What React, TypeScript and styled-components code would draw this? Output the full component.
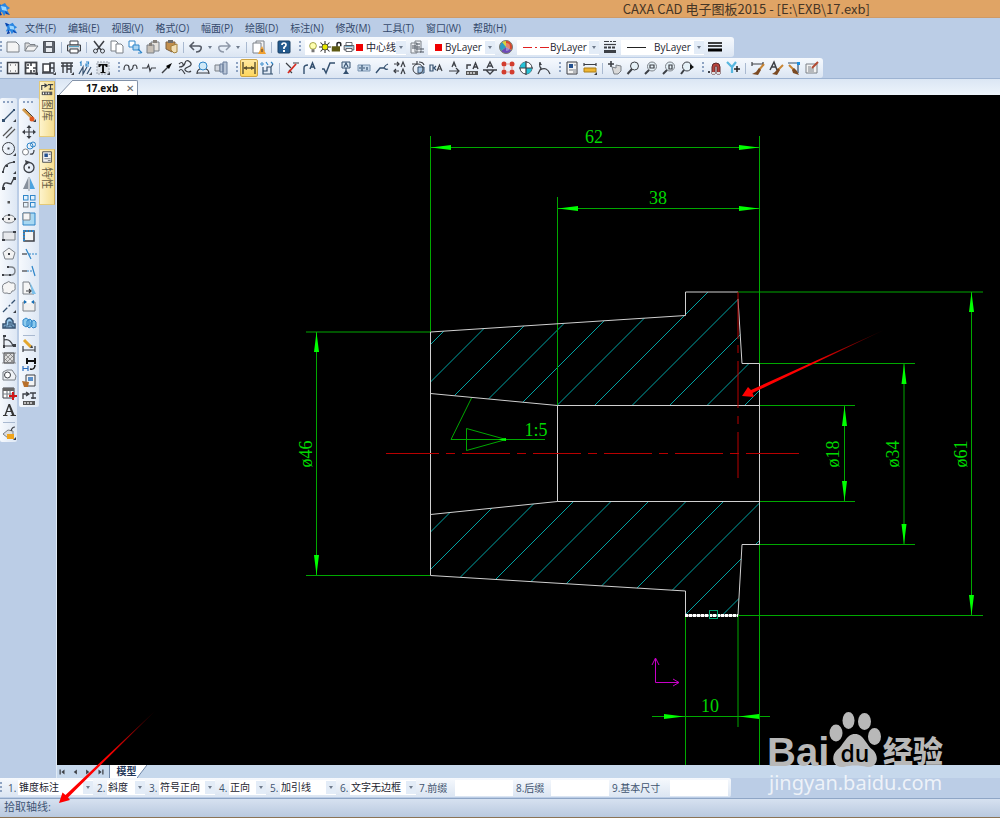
import React from 'react';
import styled, { createGlobalStyle } from 'styled-components';

const GlobalStyle = createGlobalStyle`
  * { box-sizing: border-box; }
  html, body { margin: 0; }
  body {
    background: #bbcde6;
    font-family: 'Open Sans', 'Noto Sans CJK SC', sans-serif;
    font-size: 11px;
    color: #2b3a52;
  }
  button, select, input { font: inherit; color: inherit; }
`;

/* ---------- icons ---------- */

const K = '#3c3f45';
const G = '#7b8087';
const B = '#2f86c9';
const N = '#34506f';

const s = (d: string, color = K, w = 1.2) => <path d={d} fill="none" stroke={color} strokeWidth={w} />;
const f = (d: string, color = K) => <path d={d} fill={color} />;
const corner = f('M15 12v3h-3z', K);

const icons: Record<string, React.ReactNode> = {
  new: <path d="M2 3h9l3 3v7H2z" fill="#f4f4f4" stroke={G} />,
  open: <><path d="M2 12V4h4l1 1.500h5V7" fill="#ddd" stroke={G} /><path d="M2 12l3-5h10l-4 5z" fill="#f2f2f2" stroke={G} /></>,
  save: <><path d="M2.500 2.500h11v11h-11z" fill="#5e636b" stroke="#4a4e55" /><path d="M5 3h6v4H5zM5 9h6v4H5z" fill="#e8ebef" /></>,
  print: <><path d="M4 2h8v4H4z" fill="#fff" stroke={K} /><path d="M1.500 6h13v6h-13z" fill="#d5d8dc" stroke={K} /><path d="M4 10h8v4H4z" fill="#fff" stroke={K} />{f('M3 7h10v1H3z', '#5aa7c8')}</>,
  cut: <>{s('M3 2l7 9M13 2L6 11', K, 1.5)}<circle cx="4.500" cy="12" r="2" fill="none" stroke={K} /><circle cx="11.500" cy="12" r="2" fill="none" stroke={K} /></>,
  copy: <><path d="M2 2h5l2 2v8H2z" fill="#fff" stroke={G} /><path d="M7 5h5l2 2v7H7z" fill="#fff" stroke={G} /></>,
  copyBase: <><path d="M2 2h6v6H2z" fill="#fff" stroke={B} /><path d="M6 6h6v5H6z" fill="#a9d4f2" stroke={B} />{s('M11 10l4 4M11 14l3 0', B)}</>,
  paste: <><path d="M6 3h8v9H6z" fill="#e4e1dc" stroke={G} /><path d="M2 6h7v8H2z" fill="#c6bfb6" stroke={G} />{f('M8 1h4v3H8zM4 4h3v3H4z', '#86817b')}</>,
  clip: <><path d="M3 3h9v8l-3 2-6-3z" fill="#c28f4d" stroke="#7d6040" />{f('M5 1h5v3H5z', '#6c6c6c')}<path d="M8 7l6-2v8l-3 1-3-3z" fill="#f1dfb5" stroke="#a3803a" /></>,
  undo: s('M6 3L2 7l4 4M2.500 7H11q3 0 2 3t-5 3', '#555b66', 1.6),
  redo: s('M10 3l4 4-4 4M13.500 7H5q-3 0-2 3t5 3', '#8e98a8', 1.5),
  recover: <><path d="M5 2h8v10H5z" fill="#f4f4f4" stroke={G} /><path d="M2 4h8v10H2z" fill="#fff" stroke={G} />{f('M11 7l4 8H7z', '#f0a030')}{f('M10.500 10h1v3h-1z', K)}</>,
  help: <><rect x="2" y="2" width="12" height="12" rx="1" fill="#235a8e" stroke="#183e64" />{s('M6 6q0-2 2-2t2 2q0 1-2 2.500V10', '#fff', 1.7)}{f('M7 11h2v2H7z', '#fff')}</>,
  layers: <><path d="M2 4h6v10H2zM6 2h6v11H6z" fill="#eef1f5" stroke={G} />{s('M3 7h4M3 9h4M7 5h4M7 8h4M7 10h8M11 13h4', '#49515c')}</>,
  wheel: <><circle cx="8" cy="8" r="6.500" fill="#d9d33c" />{f('M8 8V1.500A6.500 6.500 0 0 1 13.600 11z', '#d9472c')}{f('M8 8l5.600 3.200A6.500 6.500 0 0 1 3 12z', '#6d4ab8')}{f('M8 8l-5 4A6.500 6.500 0 0 1 4 3z', '#2d9cc4')}<circle cx="8" cy="8" r="6.500" fill="none" stroke="#777" />{f('M8 4a4 4 0 0 1 0 8z', '#ffffff55')}</>,
  ltype: <><path d="M2 2.500h12" stroke={K} strokeDasharray="5 1 2 1" />{s('M2 5.500h12', K)}<path d="M2 8.500h12" stroke={K} strokeWidth="2" strokeDasharray="3 1" />{s('M2 12.500h12', K, 3)}</>,
  lweight: <>{s('M1 4h14M1 7h14', '#000', 1.6)}{s('M1 11h14', '#000', 3)}</>,

  frame: <><rect x="2.500" y="2.500" width="11" height="11" fill="#f7f7f7" stroke={K} strokeWidth="1.500" />{s('M5 5h1M10 5h1M5 11h1M10 11h1', K)}</>,
  frame2: <><rect x="2.500" y="2.500" width="11" height="11" fill="#fff" stroke={K} strokeWidth="1.800" />{s('M8 2v4M8 10v4M2 8h4M10 8h4M4 5h2M10 11h2', K, 1.6)}{corner}</>,
  titleblk: <><path d="M2 4h7v8H2z" fill="#fff" stroke={K} strokeWidth="1.500" />{s('M9 12V3h4v9M1 13h12M9 8h4', K, 1.4)}{corner}</>,
  table: <>{s('M2 3h12M2 6h12M4 3v10M8 3v10M12 3v10M8 9h4', K, 1.4)}{corner}</>,
  serial: <>{s('M2 14l4-7v7l4-7M10 14l4-7', N)}{s('M3 3l1-1v4M9 2h2.500v2H9v2h3', B)}{corner}</>,
  textT: <><path d="M2 2h12v12H2z" fill="#dce1e7" stroke="#9aa3af" strokeDasharray="2 1" />{f('M3.500 4h9v3h-1.500l-1-1.500H9V12h1.500v1h-5v-1H7V5.500H6L5 7H3.500z', '#111')}{corner}</>,
  wave: s('M1 10q0-5 2.500-5T6 8t2 2 2-3 2-2 2 4', K),
  breakl: s('M1 8h5l1.500-3 1.500 6 1.500-3H15', K),
  arrow: <>{s('M3 13l7-7', K, 1.5)}{f('M13 3L7 6l3 3z', '#000')}</>,
  curve: <>{s('M2 4q3-3 4 0T2 7q5 0 6-4t5-1q3 3-2 5t-2 4 5 0M2 11q2-3 4 0t2 3', K)}</>,
  zoomb: <><circle cx="8" cy="6" r="4" fill="#cfe9f8" stroke={B} />{s('M2 14q0-4 3-5M14 14q0-4-3-5M2 13h12', K)}</>,
  sect: <><path d="M2 5h5v6H2z" fill="#d3d8e0" stroke={G} /><path d="M7 4h3v8H7zM10 2h4v12h-4z" fill="#b7c4d6" stroke="#6b7f9c" /></>,
  dim: <>{s('M2 2v12M14 2v12M3 8h10', '#5c5230', 1.4)}{f('M2 8l4-2v4zM14 8l-4-2v4z', '#5c5230')}</>,
  coord: <>{s('M4 7v7h10M4 11h4V7h4v7M12 7l2-3', N)}<circle cx="3" cy="4" r="1.200" fill="none" stroke={B} />{s('M7 2l2 3M12 2l2 2', B)}</>,
  weld: <>{s('M2 3l5 5M9 3h6M5 10l3 3', K)}{s('M4 13L12 4', '#d62a1e', 1.8)}</>,
  ref: <>{s('M2 14V8q0-3 4-3', N, 1.4)}{s('M8 9l2.500-6L13 9M9 7h3', N, 1.5)}</>,
  rough: s('M2 9h2l2 4 4-10h5', N, 1.5),
  datum: <><path d="M4 2h8v6H4z" fill="#dbe9f6" stroke={N} />{s('M6 7l2-4 2 4M8 8v4', N)}{f('M5 14h6l-3-4z', N)}</>,
  fcf: <><path d="M2 5h12v6H2z" fill="#c6d8ea" stroke="#7893b0" />{s('M6 5v6M3 8h2M7 8h2M11 7v3', N)}</>,
  hatchl: <>{s('M2 13l4-5h4', N, 1.4)}{s('M10 8q1-3 4-4M10 8q2 2 4 1', N)}</>,
  swapA: <>{s('M2 4h5M2 11h5M5 2l2 2-2 2M4 9l-2 2 2 2', K)}{s('M9 7l2-5 2 5M9 14l2-5 2 5', K, 1.2)}</>,
  rotate: <><path d="M8 7h6v6H8z" fill="#a9c8e8" stroke={N} /><circle cx="8" cy="9" r="5" fill="none" stroke={K} />{s('M2 4h5V1M9 2q4 0 5 3', K)}</>,
  alignA: <>{s('M2 5h3v6H2zM8 6L6 8l2 2', N)}{s('M9 11l2.500-6L14 11M10 9h3', K)}</>,
  upA: <>{s('M6 7l2-5 2 5M7 5h2M3 11h9M10 8l3 3-3 3', K)}</>,
  rulerA: <>{f('M2 11h12v4H2z', '#555')}{s('M3 9V5h4M9 9l2.500-6L14 9M10 7h3', K, 1.4)}{s('M4 12v2M7 12v2M10 12v2', '#fff')}</>,
  A: <>{s('M5 8l3-6 3 6M6 6h4M1 10h14M4 10l4 4 4-4', K, 1.3)}</>,
  dots: <>{[4, 12].map(x => [4, 12].map(y => <circle key={`${x}${y}`} cx={x} cy={y} r="2.500" fill="#d23c2e" />))}{s('M4 7v2M12 7v2M7 4h2M7 12h2', '#e39a92')}</>,
  target: <><circle cx="8" cy="8" r="6" fill="#fff" stroke={K} />{f('M8 8V2a6 6 0 0 0-6 6zM8 8v6a6 6 0 0 0 6-6z', '#24c3d8')}{s('M8 1v14M1 8h14', K)}</>,
  arcA: <>{s('M4 2q-1 5 1 6l-3 6M4 10q7-4 10 4', K)}{f('M4 2l2 3H3z', K)}</>,
  props: <><path d="M3 2h10v12H3z" fill="#f3f3f3" stroke={K} />{f('M5 4h4v4H5z', '#23508f')}{s('M10 5h2M5 10h7M9 12h3', G)}</>,
  ruler: <>{s('M2 3v3M14 3v3M2 4.500h12', K)}<path d="M2 8h12v4H2z" fill="#efb531" stroke="#a97c16" />{corner}</>,
  pan: <>{s('M4 1v6M1 4h6', K, 1.6)}<path d="M5 7l4 1V5l5 1v5l-3 3H7z" fill="#d9d9d9" stroke={G} /></>,
  zoom: <><circle cx="9.500" cy="6" r="4" fill="#e5f1f8" stroke={K} />{s('M7 9l-4.500 5', K, 2)}</>,
  zoomW: <><circle cx="9" cy="6.500" r="4.500" fill="#e5f1f8" stroke={G} />{s('M7 5h4v3H7z', K)}{s('M6 10l-4 4', K, 2)}</>,
  zoomP: <><circle cx="9" cy="6.500" r="4.500" fill="#e5f1f8" stroke={G} />{s('M8 9V5h3v4z', K)}{s('M6 10l-4 4', K, 2)}</>,
  zoomD: <><circle cx="8" cy="6.500" r="4.500" fill="#e5f1f8" stroke={K} />{s('M5 10l-3 4', K, 2)}{f('M11 4l4 3-4 3z', '#111')}</>,
  magnet: <><path d="M5 14V7a4 4 0 0 1 8 0v7h-3V7q0-1-1-1T8 7v7z" fill="#b8423c" stroke="#5e2a2a" />{f('M1 11h2v2H1z', K)}{f('M5 12h3v2H5zM10 12h3v2h-3z', '#ddd')}</>,
  track: <>{s('M2 2l5 5 4-5M7 7v6', '#58b7df', 2.2)}{s('M12 6v6M9 9h6', '#222', 1.5)}</>,
  brush1: <>{s('M2 2v4M13 2v4M2 4h11', K)}{s('M14 4l-5 6', '#c88534', 2)}{f('M9 8l2 2-3 5-6-1 4-2z', '#7b4a22')}</>,
  brush2: <>{s('M2 10L6 2l3 8M4 7h4', K, 1.5)}{s('M15 5l-5 5', '#c88534', 2)}{f('M10 8l2 2-3 5-5-1 3-2z', '#7b4a22')}</>,
  brush3: <>{s('M2 3h10v10', N)}{f('M11 2h3v3h-3z', '#1b8fe0')}{s('M3 5l6 6', '#c88534', 2)}{f('M8 8l3 3 2 4-6-2-1-3z', '#7b4a22')}</>,
  style: <><path d="M2 4h11v9H2z" fill="#f2f2f2" stroke={G} />{s('M4 7h3M4 9h6M4 11h6', G)}{s('M14 2L8 8', '#b24a32', 2)}</>,

  line: <>{s('M3 13L13 3', N)}{f('M1 12h3v3H1zM12 2h2v2h-2z', N)}{corner}</>,
  parallel: s('M2 12L11 3M5 14l9-9', '#555'),
  circle: <><circle cx="7.500" cy="7.500" r="6" fill="none" stroke={K} />{f('M6.500 6.500h2v2h-2z', K)}{corner}</>,
  arc: <>{s('M2 13Q3 4 13 3', K)}{f('M1 12h2v2H1zM12 2h2v2h-2zM5 6h2v2H5z', K)}{corner}</>,
  spline: <>{s('M2 13q0-7 4-6t4 1 3-6', K, 1.4)}{f('M1 11h3v3H1zM12 1h3v3h-3z', K)}</>,
  point: f('M6.500 7h2.500v2.500H6.500z', '#555'),
  ellipse: <><ellipse cx="8" cy="8" rx="6" ry="4" fill="#eee" stroke={G} />{f('M7 3h2v2H7zM7 7h2v2H7zM1 7h2v2H1zM13 7h2v2h-2z', K)}</>,
  rect: <><path d="M2 4h12v8H2z" fill="#e7e9ec" stroke={G} />{f('M12 3h3v2h-3zM1 11h3v2H1z', K)}</>,
  polygon: <><path d="M8 2l6 4.500L12 13H4L2 6.500z" fill="#f2f2f2" stroke={G} />{f('M7 7h2v2H7z', K)}</>,
  pline: <>{s('M2 12h8q4 0 4-4t-4-4H7', G, 1.4)}{f('M1 11h2v2H1zM8 11h2v2H8zM6 3h2v2H6z', K)}</>,
  cloud: <path d="M5 3q3-3 5 0 5-1 4 4 1 4-3 4-1 4-5 2-5 1-4-3-2-6 3-7z" fill="#f5f5f5" stroke={G} />,
  cline: <><path d="M2 14L14 2" stroke={N} strokeWidth="1.300" strokeDasharray="6 2 2 2" />{corner}</>,
  offset: <><path d="M2 13V9h3V6q3-6 7 0v3h2v4z" fill="#9ccdf0" stroke={N} strokeWidth="1.500" />{s('M4 13v-2h4V7h2v4h2v2', N)}</>,
  axis: <>{s('M3 2v11h11M3 7q6-2 9 6', K)}{f('M2 12h2v3H2zM12 11h3v3h-3zM2 2h3v2H2z', K)}</>,
  hatch: <><path d="M3 3h10v10H3z" fill="#dcdcdc" stroke={K} />{s('M3 7l4-4M3 11l8-8M5 13l8-8M9 13l4-4M3 3l10 10M8 3l5 5M3 8l5 5M1 3h14M1 13h14', '#777', 0.7)}</>,
  region: <><path d="M2 13V5l4-2h5l4 6-1 4z" fill="#eef1f5" stroke={G} /><circle cx="6.500" cy="8" r="3" fill="#fff" stroke={K} /></>,
  gridplus: <><path d="M2 3h11v10H2z" fill="#fff" stroke={K} />{f('M2 3h11v3H2z', '#666')}{s('M2 9h11M6 6v7M9 6v7', G)}{s('M12 7v8M8 11h8', '#d01818', 2)}</>,
  bigA: f('M7.500 2h1.500l4.500 11H15v1H9.500v-1h1.500l-1-3H6l-1 3h1.500v1H2v-1h1.500zM8 4.500L6.400 9h3.200z', '#333'),
  tag: <><path d="M2 9l5-4 5 1v5l-5 2z" fill="#ddd" stroke={G} />{s('M10 6q1-4 4-4', K)}{f('M6 9h7v5H6z', '#f0a41c')}{corner}</>,

  erase: <>{s('M2 2l8 8', '#d39a4a', 3)}{s('M4 2l8 8', '#4a4038', 1)}<circle cx="11" cy="12" r="2.500" fill="#e0561c" />{corner}</>,
  move: <>{s('M8 3v10M3 8h10', K, 1.2)}{f('M8 1l2.500 3h-5zM8 15l2.500-3h-5zM1 8l3-2.500v5zM15 8l-3-2.500v5z', K)}</>,
  copyc: <><circle cx="4.500" cy="11" r="3" fill="#fff" stroke={G} /><circle cx="9" cy="5" r="3" fill="none" stroke={B} /><circle cx="12" cy="3.500" r="2.500" fill="none" stroke={B} />{s('M9 13q4 1 4-4', K)}</>,
  rot: <><circle cx="8" cy="8.500" r="5" fill="none" stroke={K} strokeWidth="1.300" />{f('M7 7.500h2v2H7zM4 1l5 2-4 3z', K)}</>,
  mirror: <>{f('M7 2v11H2z', '#87909c')}{f('M9 2v11h5z', '#4ba3df')}{s('M8 1v14', G, 0.8)}</>,
  array: <>{[2.5, 9.5].map(x => [2.5, 9.5].map(y => <rect key={`${x}${y}`} x={x} y={y} width="4.500" height="4.500" fill="#e4f1fb" stroke={x < 5 && y > 5 ? G : B} />))}</>,
  scale: <><path d="M2 2h12v12H2z" fill="#a8d8f2" stroke={B} /><path d="M2 2h7v7H2z" fill="#f5f5f5" stroke={G} /></>,
  stretch: <><path d="M3 3h10v10H3z" fill="#f5f5f5" stroke={K} strokeWidth="1.500" /><path d="M3 13V3h10" fill="none" stroke={B} strokeWidth="2" strokeDasharray="2 1" /></>,
  trim: <>{s('M1 8h5', K)}{s('M5 3l5 10', B)}<path d="M8 8h8" stroke={B} strokeDasharray="2 1" /></>,
  extend: <>{s('M1 8h5', K)}<path d="M6 8h5" stroke={B} strokeDasharray="2 1" />{s('M11 3l3 10', B)}</>,
  chamfer: <><path d="M2 2h6l5 12H2z" fill="#f5f5f5" stroke={G} />{f('M9 2l6 12h-4z', '#7cc0ea')}{s('M5 11h5M8 9l2 2-2 2', K)}</>,
  brk: <><path d="M2 4h12v9H2z" fill="#f0f0f0" stroke={G} />{f('M5 2h6v3H5z', '#fff')}{f('M3 2l3 2-3 2zM13 2l-3 2 3 2z', '#1670b8')}</>,
  block: <path d="M2 5l3-2 3 2v5l-3 2-3-2zM6 6l3-2 2 2v5l-3 2-2-2zM10 7l3-2 2 2v5l-3 1-2-2z" fill="#8ccbee" stroke={B} />,
  dimed: <>{s('M2 8v6M14 8v6M2 12h12', K)}{s('M3 2l7 7', '#e3a62c', 3)}{f('M9 10l3 0-1-3z', K)}</>,
  dims: <>{s('M6 2v6M14 2v6M6 5h8', '#111', 2)}{s('M2 10v5M7 10v5M2 12.500h5', '#2c6fc0')}{s('M14 9q0 5-5 4', '#111', 1.5)}</>,
  propb: <><path d="M5 2h9v11H5z" fill="#f3f3f3" stroke={K} />{f('M7 4h5v4H7z', '#5b8fc9')}{f('M1 8l7 1-1 5-4 0z', '#b8702c')}</>,
  lib: <>{s('M2 9V4h5M5 2l3 2-3 2M9 3h6M12 3v6M10 8h5', K, 1.3)}{f('M2 11h12v4H2z', '#555')}{s('M4 12v2M7 12v2M10 12v2', '#fff')}</>,
  bulb: <><circle cx="8" cy="6.500" r="4.500" fill="#ffffb0" stroke="#8a8a20" />{f('M6 11h4v4H6z', '#777')}</>,
  sun: <>{s('M8 0v16M0 8h16M2 2l12 12M14 2L2 14', '#333', 1.4)}<circle cx="8" cy="8" r="4" fill="#e8e800" stroke="#333" /></>,
  lock: <>{s('M8 8V4q0-2 2.500-2T13 4v3', '#222', 2)}{f('M1 7h11v7H1z', '#5e5a12')}</>,
  first: f('M4 4h2v8H4zM12 4v8L7 8z', K),
  prev: f('M11 4v8L6 8z', K),
  next: f('M5 4v8l5-4z', K),
  last: f('M4 4v8l5-4zM10 4h2v8h-2z', K),
};

const Glyph = styled.svg<{ $size?: number }>`
  display: block;
  flex: none;
  width: ${p => p.$size ?? 16}px;
  height: ${p => p.$size ?? 16}px;
`;
const Icon = ({ name, size }: { name: string; size?: number }) => (
  <Glyph viewBox="0 0 16 16" $size={size} aria-hidden="true">{icons[name]}</Glyph>
);

const AppMark = ({ size }: { size: number }) => (
  <Glyph viewBox="0 0 16 16" $size={size} aria-hidden="true">
    <path d="M2 2l4 2 4-2 2 3 3 2-3 2 3 5-4-2-2 3-2-4-5 1 2-4-2-3z" fill="#2a86e2" />
    <path d="M6 5l5 1 1 4-5-1z" fill="#9ad6ff" />
    <path d="M1 2l5 2-3 2zM10 10l5 4-4-1zM5 10l2 4-4 1z" fill="#0a3fa8" />
  </Glyph>
);

/* ---------- frame ---------- */

const Window = styled.div`
  position: relative;
  display: flex;
  flex-direction: column;
  min-height: 100vh;
  overflow: hidden;
`;
const TitleBar = styled.header`
  display: flex;
  align-items: center;
  justify-content: space-between;
  height: 18px;
  padding-right: 130px;
  background: #e0a465;
  border-bottom: 1px solid #cf9a66;
`;
const TitleMark = styled.span`
  margin-left: -5px;
`;
const Title = styled.h1`
  margin: 0;
  font-family: 'Noto Sans CJK SC', sans-serif;
  font-size: 13px;
  font-weight: 400;
  line-height: 17px;
  color: #453526;
  white-space: nowrap;
`;
const MenuBar = styled.nav`
  display: flex;
  align-items: center;
  gap: 12px;
  height: 19px;
  padding-left: 4px;
  white-space: nowrap;
`;
const MenuItem = styled.button`
  padding: 0;
  border: 0;
  background: none;
  font-size: 10px;
  line-height: 18px;
  color: #34496b;
`;
const MenuMark = styled.span`
  margin-right: -5px;
`;

const Toolbar = styled.div<{ $last?: boolean }>`
  display: flex;
  align-items: center;
  align-self: flex-start;
  height: 20px;
  margin-bottom: ${p => (p.$last ? 0 : 1)}px;
  padding-right: 2px;
  background: linear-gradient(#f6f9fd, #e9f0f9 50%, #dbe5f2);
  border-radius: 0 3px 3px 0;
`;
const ToolButton = styled.button<{ $on?: boolean; $narrow?: boolean }>`
  display: flex;
  align-items: center;
  justify-content: center;
  flex: none;
  width: ${p => (p.$narrow ? 10 : 18)}px;
  height: 18px;
  padding: 0;
  border: ${p => (p.$on ? '1px solid #cfa544' : '0')};
  border-radius: 2px;
  background: ${p => (p.$on ? 'linear-gradient(#ffe9a0, #ffd75e)' : 'none')};
`;
const Divider = styled.span`
  flex: none;
  width: 1px;
  height: 11px;
  margin: 0 3px;
  background: #a9b9d0;
`;
const Grip = styled.span<{ $lead?: boolean }>`
  flex: none;
  width: 2px;
  height: 12px;
  margin: ${p => (p.$lead ? '0 2px 0 0' : '0 2px 0 6px')};
  background: repeating-linear-gradient(#8ea3c2 0 2px, transparent 2px 4px);
`;
const Caret = styled.span`
  width: 0;
  height: 0;
  border: 2px solid transparent;
  border-top: 3px solid #6f7b8c;
  border-bottom: 0;
`;

const ComboBox = styled.label<{ $w: number; $flush?: boolean }>`
  display: flex;
  align-items: center;
  flex: none;
  width: ${p => p.$w}px;
  height: 15px;
  margin: ${p => (p.$flush ? '0' : '0 2px')};
  padding-left: ${p => (p.$flush ? 0 : 2)}px;
  background: #fff;
`;
const Select = styled.select`
  flex: 1;
  min-width: 0;
  height: 15px;
  padding: 0 0 0 1px;
  border: 0;
  appearance: none;
  background: transparent;
  color: #1d2530;
  font-size: 10px;
  line-height: 15px;
`;
const DropArrow = styled.span`
  display: flex;
  align-items: center;
  justify-content: center;
  flex: none;
  width: 10px;
  height: 13px;
  background: #e3ecf7;
`;
const Swatch = styled.span`
  flex: none;
  width: 7px;
  height: 7px;
  margin: 0 2px 0 1px;
  background: #f00000;
`;
const Inset = styled.span`
  flex: none;
  width: 4px;
`;
const Combo = ({ w, value, label, flush, children }: { w: number; value: string; label: string; flush?: boolean; children?: React.ReactNode }) => (
  <ComboBox $w={w} $flush={flush}>
    {children}
    <Select aria-label={label}><option>{value}</option></Select>
    <DropArrow><Caret /></DropArrow>
  </ComboBox>
);

/* ---------- side dock ---------- */

const Body = styled.div`
  display: flex;
  flex: 1;
  border-top: 1px solid #9db3d2;
`;
const Dock = styled.aside`
  display: flex;
  align-items: flex-start;
  flex: none;
  width: 57px;
  border-right: 1px solid #dfeaf6;
`;
const ToolColumn = styled.div<{ $h: number; $w: number }>`
  display: flex;
  flex-direction: column;
  align-items: center;
  width: ${p => p.$w}px;
  height: ${p => p.$h}px;
  margin: 19px 2px 0 0;
  background: linear-gradient(90deg, #f6f9fd, #dde7f4);
  border-radius: 2px;
`;
const ColumnGrip = styled.span`
  flex: none;
  width: 12px;
  height: 2px;
  margin: 3px 0;
  background: repeating-linear-gradient(90deg, #8ea3c2 0 2px, transparent 2px 4px);
`;
const ColumnButton = styled.button`
  display: flex;
  align-items: center;
  justify-content: center;
  flex: 1;
  width: 16px;
  min-height: 0;
  padding: 0;
  border: 0;
  background: none;
`;
const ColumnDivider = styled.span`
  flex: none;
  width: 12px;
  height: 1px;
  margin: 3px 0 2px;
  background: #a9b9d0;
`;
const SideTabs = styled.div`
  display: flex;
  flex-direction: column;
  gap: 12px;
  margin: 2px 0 0 -2px;
`;
const SideTab = styled.button`
  display: flex;
  flex-direction: column;
  align-items: center;
  gap: 3px;
  width: 16px;
  height: 56px;
  padding: 0;
  border: 1px solid #e3c978;
  border-right-color: #cba95c;
  background: linear-gradient(90deg, #fdf3cb, #f5de90);
`;
const SideTabText = styled.span`
  writing-mode: vertical-rl;
  text-orientation: sideways;
  font-size: 11px;
  line-height: 13px;
  color: #6a6047;
`;

/* ---------- document ---------- */

const Document = styled.main`
  display: flex;
  flex-direction: column;
  flex: 1;
  min-width: 0;
`;
const TabStrip = styled.div`
  display: flex;
  align-items: flex-end;
  height: 16px;
  padding-left: 2px;
  background: linear-gradient(#dbe6f4, #edf4fb);
`;
const Slant = styled.svg`
  display: block;
  flex: none;
`;
const DocTab = styled.div`
  display: flex;
  align-items: center;
  justify-content: space-between;
  width: 65px;
  height: 15px;
  padding: 0 3px 0 13px;
  border: 1px solid #8392a8;
  border-width: 1px 1px 0 0;
  border-radius: 0 2px 0 0;
  background: #fff;
  font-size: 10px;
  font-weight: 700;
  color: #111;
`;
const CloseButton = styled.button`
  padding: 0;
  border: 0;
  background: none;
  font-size: 10px;
  font-weight: 400;
  line-height: 14px;
  color: #666;
`;
const Canvas = styled.div`
  flex: 1;
  min-height: 670px;
  overflow: hidden;
  background: #000;
`;
const Drawing = styled.svg`
  display: block;
  font-family: 'Liberation Serif', serif;
  font-size: 18px;
`;
const SheetStrip = styled.div`
  display: flex;
  align-items: center;
  height: 13px;
  background: #c6d8ec;
`;
const SheetNav = styled.button`
  display: flex;
  align-items: center;
  justify-content: center;
  width: 13px;
  height: 13px;
  padding: 0 4px 0 0;
  border: 0;
  background: none;
`;
const SheetTab = styled.button`
  width: 28px;
  height: 13px;
  padding: 0 0 0 6px;
  border: 0;
  border-left: 1px solid #6f86a8;
  background: #fff;
  font-size: 10px;
  font-weight: 700;
  line-height: 13px;
  color: #22375a;
  white-space: nowrap;
`;

/* ---------- bottom bars ---------- */

const OptionBar = styled.form`
  display: flex;
  align-items: center;
  align-self: flex-start;
  height: 19px;
  margin-bottom: 1px;
  padding-right: 3px;
  border-radius: 0 2px 2px 0;
  background: linear-gradient(#f6f9fd, #dbe5f2);
  color: #40536f;
  font-size: 10px;
`;
const OptionIndex = styled.span`
  flex: none;
  width: 10px;
  margin-left: 4px;
  white-space: nowrap;
`;
const OptionLabel = styled.label<{ $w: number }>`
  flex: none;
  width: ${p => p.$w}px;
  margin-left: 3px;
  white-space: nowrap;
`;
const OptionInput = styled.input`
  width: 58px;
  height: 16px;
  padding: 0 2px;
  border: 0;
  background: #fff;
`;
const StatusBar = styled.footer`
  height: 20px;
  padding-left: 4px;
  border-top: 1px solid #8fa6c6;
  border-bottom: 1px solid #8b7355;
  background: linear-gradient(#d6e1f0, #b9c9df);
  font-size: 11px;
  line-height: 16px;
  color: #3f5575;
`;
const PointerOverlay = styled.svg`
  position: absolute;
  left: 58px;
  bottom: 14px;
  pointer-events: none;
`;
const Watermark = styled.svg`
  position: absolute;
  right: 50px;
  bottom: 20px;
  pointer-events: none;
`;

/* ---------- part drawing ---------- */

type DimProps = { x: number; y: number; text: string; vertical?: boolean };
const DimText = ({ x, y, text, vertical }: DimProps) => (
  <text x={x} y={y} textAnchor="middle" fill="#00d800" transform={vertical ? `rotate(-90 ${x} ${y})` : undefined}>{text}</text>
);
const HArrow = ({ x, y, dir }: { x: number; y: number; dir: 1 | -1 }) => (
  <path d={`M${x} ${y}L${x + 20 * dir} ${y - 2.5}V${y + 2.5}z`} fill="#0f0" />
);
const VArrow = ({ x, y, dir }: { x: number; y: number; dir: 1 | -1 }) => (
  <path d={`M${x} ${y}L${x - 2.5} ${y + 20 * dir}H${x + 2.5}z`} fill="#0f0" />
);
const hatchSums = Array.from({ length: 16 }, (_, i) => 775 + i * 37.5);

const PartDrawing = () => (
  <Drawing width="943" height="670" viewBox="57 95 943 670" role="img" aria-label="17.exb">
    <defs>
      <clipPath id="section">
        <path d="M430.500 332L685.500 315.500V292H738L742 363.500H759V405.500H557.500L430.500 393z" />
        <path d="M430.500 514L557.500 501.500H759V544.500H742L738 615H685.500V591L430.500 575.500z" />
      </clipPath>
      <linearGradient id="fadeA" gradientUnits="userSpaceOnUse" x1="884" y1="330" x2="742" y2="396">
        <stop offset="0" stopColor="#f00" stopOpacity="0.150" />
        <stop offset="0.500" stopColor="#f00" />
      </linearGradient>
    </defs>

    <g stroke="#00a3a3" clipPath="url(#section)">
      {hatchSums.map(c => <path key={c} d={`M${c - 640} 640L${c - 280} 280`} />)}
    </g>

    <g stroke="#00a800" fill="none">
      <path d="M430.500 136V332M759.500 136V765M557.500 197V405M431 147.500H759M558 208.500H759" />
      <path d="M306 332H430M306 575.500H430M316.500 332V575" />
      <path d="M738 292H983M738 615.500H983M971.500 292V615" />
      <path d="M759 363.500H915M759 544.500H915M904 364V544" />
      <path d="M759 405.500H855M759 501.500H855M844.500 406V501" />
      <path d="M685.500 616V765M738 616V727M652 716.500H770" />
      <path d="M471.500 398L451 439.500H545M466.500 428.500V450.500L506 439.500z" />
    </g>
    <HArrow x={431} y={147.5} dir={1} />
    <HArrow x={759} y={147.5} dir={-1} />
    <HArrow x={558} y={208.5} dir={1} />
    <HArrow x={759} y={208.5} dir={-1} />
    <VArrow x={316.5} y={332} dir={1} />
    <VArrow x={316.5} y={575} dir={-1} />
    <VArrow x={971.5} y={292} dir={1} />
    <VArrow x={971.5} y={615} dir={-1} />
    <VArrow x={904} y={364} dir={1} />
    <VArrow x={904} y={544} dir={-1} />
    <VArrow x={844.5} y={406} dir={1} />
    <VArrow x={844.5} y={501} dir={-1} />
    <HArrow x={684} y={716.5} dir={-1} />
    <HArrow x={739} y={716.5} dir={1} />
    <path d="M498 439.500l8-1.500v3z" fill="#0f0" />

    <g stroke="#d0d0d0" fill="none">
      <path d="M738 299L742 363.500H759.500V544.500H742L738 615M685.500 615V591L430.500 575.500V332L685.500 315.500V292H738" />
      <path d="M430.500 393.500L557.500 405.500H759M430.500 514.500L557.500 501.500H759M557.500 405.500V501.500" />
    </g>
    <path d="M685 615.500H738" stroke="#b8b8b8" strokeWidth="2" />
    <path d="M685 615.500H738" stroke="#fff" strokeWidth="3" strokeDasharray="3 1" />
    <rect x="709.500" y="610.500" width="8" height="8" fill="none" stroke="#00a070" />

    <g stroke="#b80000">
      <path d="M386 453.500H439" />
      <path d="M446 453.500H739" strokeDasharray="9 7 48 7" />
      <path d="M746 453.500H799" />
      <path d="M738 292V339M738 345V353M738 361V408M738 416V424M738 432V478" />
    </g>

    <path d="M655.500 659V682.500H679M652 665L655.500 658L659 665M673 679L679 682.500L673 686" fill="none" stroke="#c800c8" />

    <DimText x={594} y={143} text="62" />
    <DimText x={658} y={204} text="38" />
    <DimText x={710} y={712} text="10" />
    <DimText x={536} y={436} text="1:5" />
    <DimText x={312} y={454} text="ø46" vertical />
    <DimText x={839} y={454} text="ø18" vertical />
    <DimText x={899} y={454} text="ø34" vertical />
    <DimText x={967} y={454} text="ø61" vertical />

    <path d="M884 330L751 390L748 387L742 396L754 397L752.500 393z" fill="url(#fadeA)" />
  </Drawing>
);

/* ---------- content ---------- */

const menus = ['文件(F)', '编辑(E)', '视图(V)', '格式(O)', '幅面(P)', '绘图(D)', '标注(N)', '修改(M)', '工具(T)', '窗口(W)', '帮助(H)'];
const mainTools = 'new open save | print | cut copy copyBase paste clip | undo v redo v | recover | help';
const drawTools =
  'frame frame2 titleblk table serial textT : wave breakl arrow curve zoomb sect : dim* coord | weld ref rough datum fcf hatchl swapA rotate alignA upA rulerA A dots target arcA : props ruler | pan zoom zoomW zoomP zoomD : magnet track | brush1 brush2 brush3 style';
const leftTools = 'line parallel circle arc spline point ellipse rect polygon pline cloud cline offset axis hatch region gridplus bigA | tag';
const editTools = 'erase move copyc rot mirror array scale stretch trim extend chamfer brk block | dimed dims propb lib';
const options = [
  { w: 75, value: '锥度标注' },
  { w: 38, value: '斜度' },
  { w: 56, value: '符号正向' },
  { w: 37, value: '正向' },
  { w: 56, value: '加引线' },
  { w: 66, value: '文字无边框' },
];
const inputs = [
  { id: 'prefix', label: '7.前缀', w: 36 },
  { id: 'suffix', label: '8.后缀', w: 35 },
  { id: 'basic', label: '9.基本尺寸', w: 58 },
];

const renderTools = (list: string) =>
  list.split(' ').map((t, i) => {
    if (t === '|') return <Divider key={i} />;
    if (t === ':') return <Grip key={i} />;
    if (t === 'v') return <ToolButton key={i} $narrow aria-label="more"><Caret /></ToolButton>;
    const name = t.replace('*', '');
    return <ToolButton key={i} $on={t.endsWith('*')} aria-label={name}><Icon name={name} /></ToolButton>;
  });
const renderColumn = (list: string) =>
  list.split(' ').map((t, i) =>
    t === '|' ? <ColumnDivider key={i} /> : <ColumnButton key={i} aria-label={t}><Icon name={t} /></ColumnButton>,
  );

export default function App() {
  return (
    <Window>
      <GlobalStyle />
      <TitleBar>
        <TitleMark><AppMark size={16} /></TitleMark>
        <Title>CAXA CAD 电子图板2015 - [E:\EXB\17.exb]</Title>
      </TitleBar>
      <MenuBar>
        <MenuMark><AppMark size={14} /></MenuMark>
        {menus.map(m => <MenuItem key={m}>{m}</MenuItem>)}
      </MenuBar>

      <Toolbar>
        <Grip $lead />
        {renderTools(mainTools)}
        <Grip />
        <Combo w={101} value="中心线" label="图层">
          <Icon name="bulb" size={12} />
          <Icon name="sun" size={12} />
          <Icon name="lock" size={12} />
          <Icon name="print" size={12} />
          <Swatch />
        </Combo>
        <ToolButton aria-label="layers"><Icon name="layers" /></ToolButton>
        <Combo w={67} value="ByLayer" label="颜色"><Inset /><Swatch /></Combo>
        <ToolButton aria-label="colors"><Icon name="wheel" /></ToolButton>
        <Combo w={82} value="ByLayer" label="线型">
          <Inset />
          <Slant width="26" height="5"><path d="M0 2.500h9M12 2.500h2M17 2.500h9" stroke="#e02020" /></Slant>
        </Combo>
        <ToolButton aria-label="line types"><Icon name="ltype" /></ToolButton>
        <Combo w={83} value="ByLayer" label="线宽">
          <Inset />
          <Slant width="26" height="5"><path d="M0 2.500h19" stroke="#222" /></Slant>
        </Combo>
        <ToolButton aria-label="line weights"><Icon name="lweight" /></ToolButton>
        <Inset /><Inset />
      </Toolbar>
      <Toolbar $last>
        <Grip $lead />
        {renderTools(drawTools)}
      </Toolbar>

      <Body>
        <Dock>
          <ToolColumn $w={17} $h={344}><ColumnGrip />{renderColumn(leftTools)}</ToolColumn>
          <ToolColumn $w={20} $h={309}><ColumnGrip />{renderColumn(editTools)}</ToolColumn>
          <SideTabs>
            <SideTab><Icon name="lib" size={14} /><SideTabText>图库</SideTabText></SideTab>
            <SideTab><Icon name="props" size={14} /><SideTabText>特性</SideTabText></SideTab>
          </SideTabs>
        </Dock>
        <Document>
          <TabStrip>
            <Slant width="14" height="15"><path d="M0 15L14 0V15z" fill="#fff" /><path d="M0 15L14 0" stroke="#8392a8" /></Slant>
            <DocTab>17.exb<CloseButton aria-label="close">✕</CloseButton></DocTab>
          </TabStrip>
          <Canvas><PartDrawing /></Canvas>
          <SheetStrip>
            {['first', 'prev', 'next', 'last'].map(n => (
              <SheetNav key={n} aria-label={n}><Icon name={n} size={10} /></SheetNav>
            ))}
            <SheetTab>模型</SheetTab>
            <Slant width="10" height="13"><path d="M0 0H10L0 13z" fill="#fff" /><path d="M10 0L0 13" stroke="#6f86a8" /></Slant>
          </SheetStrip>
        </Document>
      </Body>

      <OptionBar>
        <Grip $lead />
        {options.map((o, i) => (
          <React.Fragment key={o.value}>
            <OptionIndex>{i + 1}.</OptionIndex>
            <Combo w={o.w} value={o.value} label={`${i + 1}.`} flush />
          </React.Fragment>
        ))}
        {inputs.map(n => (
          <React.Fragment key={n.id}>
            <OptionLabel htmlFor={n.id} $w={n.w}>{n.label}</OptionLabel>
            <OptionInput id={n.id} />
          </React.Fragment>
        ))}
      </OptionBar>
      <StatusBar>拾取轴线:</StatusBar>

      <PointerOverlay width="98" height="94" viewBox="58 710 98 94" aria-hidden="true">
        <defs>
          <linearGradient id="fadeB" gradientUnits="userSpaceOnUse" x1="155" y1="711" x2="60" y2="803">
            <stop offset="0" stopColor="#f00" stopOpacity="0.200" />
            <stop offset="0.500" stopColor="#f00" />
          </linearGradient>
        </defs>
        <path d="M155 711L68 797.500L70 800L59 803L62.500 792.500L65.500 795z" fill="url(#fadeB)" />
      </PointerOverlay>

      <Watermark width="184" height="88" viewBox="766 710 184 88" aria-hidden="true">
        <g fill="#b8b8b8">
          <text x="767" y="766" fontFamily="Liberation Sans" fontWeight="700" fontSize="40">Bai</text>
          <ellipse cx="836" cy="733" rx="6.500" ry="8.500" />
          <ellipse cx="848.500" cy="720.500" rx="6" ry="8.500" />
          <ellipse cx="864.500" cy="721.500" rx="6.500" ry="8.500" />
          <ellipse cx="874.500" cy="736.500" rx="6.500" ry="8.500" />
          <path d="M855 734C864 734 866 745 873 750C880 757 877 768 867 767C860 765 850 765 844 767C833 768 830 757 837 750C844 745 846 734 855 734z" />
          <text x="883" y="762" fontFamily="Noto Sans CJK SC" fontWeight="900" fontSize="30">经验</text>
        </g>
        <text x="855" y="762" textAnchor="middle" fill="#000" fontFamily="Open Sans" fontWeight="600" fontSize="23">du</text>
        <text x="769" y="790" fill="#ffffffc0" fontFamily="Noto Sans" fontSize="20">jingyan.baidu.com</text>
      </Watermark>
    </Window>
  );
}
